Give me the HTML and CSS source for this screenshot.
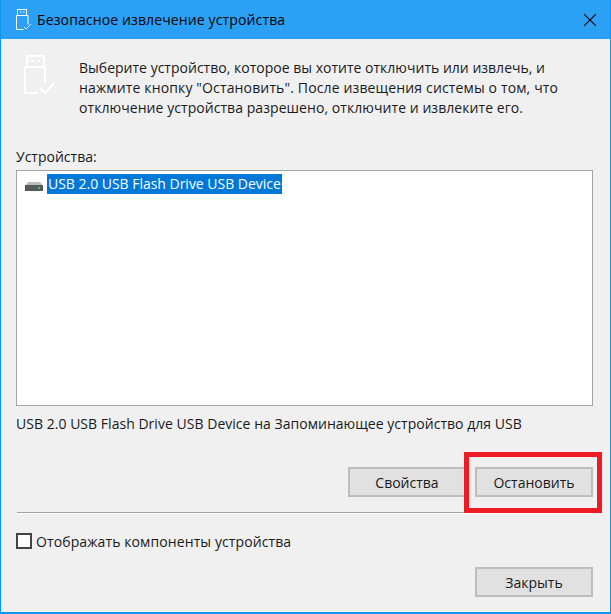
FILE: index.html
```html
<!DOCTYPE html>
<html lang="ru">
<head>
<meta charset="utf-8">
<title>Безопасное извлечение устройства</title>
<link rel="stylesheet" href="styles.css">
</head>
<body>
<div class="window">
  <header class="titlebar">
    <svg class="title-icon" width="16" height="21" viewBox="0 0 16 21" fill="none" stroke="#fff" stroke-width="1">
      <path d="M1.5 .5h9v6h-9zM4 3h1.5M7 3h1.5"/>
      <path d="M.5 6.5h11.5v9M.5 6.5v14h7"/>
      <path d="M8 18l2 2 5-5" stroke="#e8f4fd"/>
    </svg>
    <span class="title-text">Безопасное извлечение устройства</span>
    <svg class="close-icon" width="12" height="12" viewBox="0 0 12 12" stroke="#000" stroke-width="1.1"><path d="M0 0l12 12M12 0L0 12"/></svg>
  </header>
  <main class="content">
    <section class="intro">
      <svg class="intro-icon" width="31" height="40" viewBox="0 0 31 40" fill="none" stroke="#fff" stroke-width="2">
        <path d="M3 1h17v11H3zM7 6h3M13 6h3"/>
        <path d="M1 12h20v15M1 12v26h13"/>
        <path d="M16 33l5 5 9-10"/>
      </svg>
      <p class="intro-text"><span class="line line-a">Выберите устройство, которое вы хотите отключить или извлечь, и</span><span class="line line-b">нажмите кнопку "Остановить". После извещения системы о том, что</span><span class="line line-c">отключение устройства разрешено, отключите и извлеките его.</span></p>
    </section>
    <label class="list-label">Устройства:</label>
    <div class="device-list">
      <div class="device-row">
        <svg class="drive-icon" width="18" height="9" viewBox="0 0 18 9">
          <path d="M3 0h12l3 4H0z" fill="#b9bdbd"/>
          <rect y="3" width="18" height="6" fill="#555a5c"/>
          <rect x="13" y="5" width="2" height="2" fill="#37d24a"/>
        </svg>
        <span class="device-name">USB 2.0 USB Flash Drive USB Device</span>
      </div>
    </div>
    <p class="device-desc">USB 2.0 USB Flash Drive USB Device на Запоминающее устройство для USB</p>
    <div class="actions">
      <button class="btn">Свойства</button>
      <button class="btn">Остановить</button>
      <div class="highlight"></div>
    </div>
    <hr class="separator">
    <label class="check-row"><span class="checkbox"></span><span>Отображать компоненты устройства</span></label>
    <div class="footer"><button class="btn">Закрыть</button></div>
  </main>
</div>
</body>
</html>
```
FILE: styles.css
```css
* { box-sizing: border-box; }
html, body { margin: 0; padding: 0; }
body {
  width: 611px;
  height: 614px;
  overflow: hidden;
  font-family: "Open Sans", "Noto Sans", sans-serif;
  font-size: 14px;
  color: #1a1a1a;
}
.window {
  width: 611px;
  height: 614px;
  border: 1px solid #0f97f0;
  border-top: 0;
  border-bottom-width: 2px;
  display: flex;
  flex-direction: column;
  background: #f0f0f0;
}
.titlebar {
  height: 39px;
  flex: none;
  background: #2ba0f5;
  display: flex;
  align-items: center;
  padding: 0 14px 0 15px;
  color: #000;
}
.title-icon { margin-right: 5px; }
.title-text { flex: 1; font-size: 14px; letter-spacing: 0.13px; }
.close-icon { margin-top: 1px; }
.content {
  flex: 1;
  display: flex;
  flex-direction: column;
  padding: 16px 17px 18px 15px;
}
.intro { display: flex; align-items: flex-start; height: 92px; padding-left: 8px; }
.intro-icon { margin-right: 24px; flex: none; }
.intro-text { margin: 3px 0 0; line-height: 20px; white-space: nowrap; }
.line { display: block; }
.line-a { letter-spacing: 0.01px; }
.line-b { letter-spacing: 0.14px; }
.line-c { letter-spacing: 0.06px; }
.list-label { display: block; line-height: 18px; margin-top: 1px; }
.device-list {
  height: 236px;
  margin-top: 4px;
  background: #fff;
  border: 1px solid #a5a5a5;
  padding: 2px;
}
.device-row { display: flex; align-items: center; height: 20px; margin-top: 1px; }
.drive-icon { margin: 4px 4px 0 6px; flex: none; }
.device-name { background: #0078d7; color: #fff; line-height: 20px; padding: 0 1px; letter-spacing: -0.02px; }
.device-desc { margin: 9px 0 0; line-height: 18px; letter-spacing: 0.03px; white-space: nowrap; }
.actions { position: relative; display: flex; justify-content: flex-end; gap: 9px; margin-top: 34px; }
.btn {
  width: 118px;
  height: 30px;
  padding: 0;
  border: 2px solid #bdbdbd;
  background: #e1e1e1;
  font: inherit;
  color: #1a1a1a;
}
.highlight {
  position: absolute;
  left: 448px;
  top: -15px;
  width: 138px;
  height: 61px;
  border: 5px solid #ed1c24;
}
.separator {
  width: 576px;
  margin: 15px 0 0 1px;
  height: 2px;
  border: 0;
  border-top: 1px solid #a0a0a0;
  border-bottom: 1px solid #fff;
}
.check-row { display: flex; align-items: center; gap: 4px; margin-top: 17px; height: 20px; letter-spacing: 0.1px; }
.checkbox { width: 16px; height: 16px; background: #fff; border: 2px solid #444; flex: none; }
.footer { display: flex; justify-content: flex-end; margin-top: 16px; }
```
